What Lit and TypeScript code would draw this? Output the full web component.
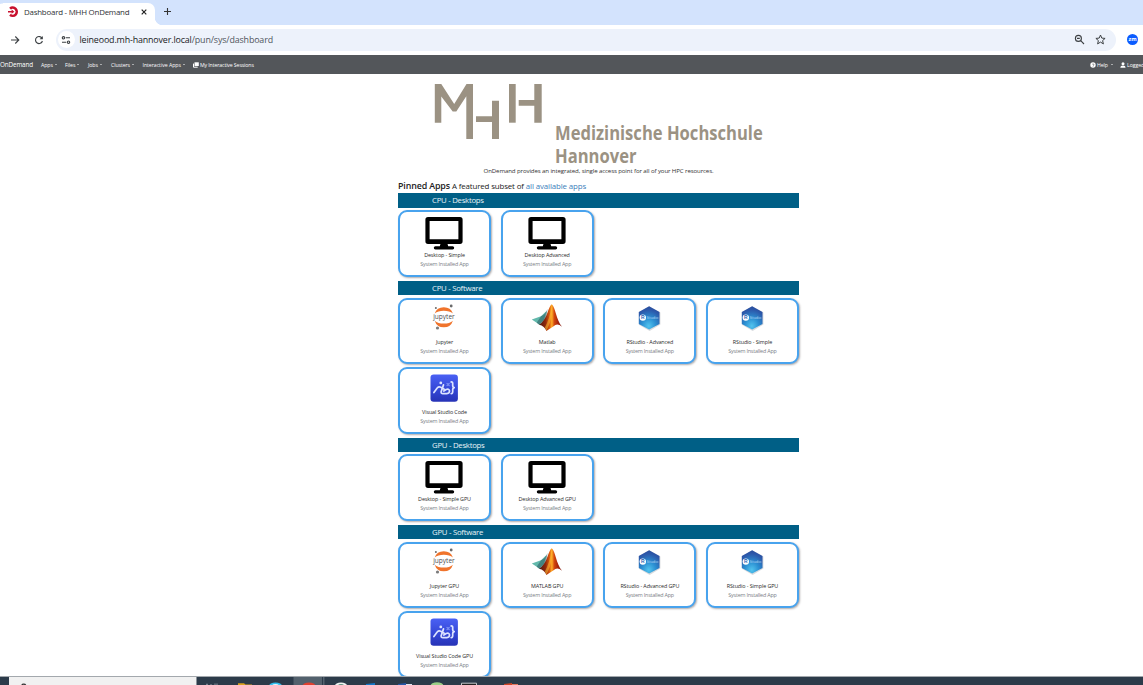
import { LitElement, html, css, svg } from "lit";
import { customElement, property } from "lit/decorators.js";

type Icon = "desktop" | "jupyter" | "matlab" | "rstudio" | "code";
interface App { name: string; icon: Icon; }
interface Group { title: string; apps: App[]; }

const groups: Group[] = [
  { title: "CPU - Desktops", apps: [
    { name: "Desktop - Simple", icon: "desktop" },
    { name: "Desktop Advanced", icon: "desktop" } ] },
  { title: "CPU - Software", apps: [
    { name: "Jupyter", icon: "jupyter" },
    { name: "Matlab", icon: "matlab" },
    { name: "RStudio - Advanced", icon: "rstudio" },
    { name: "RStudio - Simple", icon: "rstudio" },
    { name: "Visual Studio Code", icon: "code" } ] },
  { title: "GPU - Desktops", apps: [
    { name: "Desktop - Simple GPU", icon: "desktop" },
    { name: "Desktop Advanced GPU", icon: "desktop" } ] },
  { title: "GPU - Software", apps: [
    { name: "Jupyter GPU", icon: "jupyter" },
    { name: "MATLAB GPU", icon: "matlab" },
    { name: "RStudio - Advanced GPU", icon: "rstudio" },
    { name: "RStudio - Simple GPU", icon: "rstudio" },
    { name: "Visual Studio Code GPU", icon: "code" } ] },
];

// Every app icon is drawn on a 40x36 canvas.
const icons: Record<Icon, unknown> = {
  desktop: svg`
    <path fill="#000" fill-rule="evenodd" d="M4 2H36Q38.6 2 38.6 4.6V26.3Q38.6 28.9 36 28.9H4Q1.4 28.9 1.4 26.3V4.6Q1.4 2 4 2ZM5.6 6V24.2H34.4V6Z"/>
    <path fill="#000" d="M16.6 28.5H23.4L24.2 31.2H28.6Q30.2 31.2 30.2 32.8T28.6 34.4H11.4Q9.8 34.4 9.8 32.8T11.4 31.2H15.8Z"/>`,
  jupyter: svg`
    <path fill="#f0742c" d="M10.7 11.4Q12.8 5.3 19.8 5.3T28.9 11.4Q25.6 8.8 19.8 8.8T10.7 11.4Z"/>
    <path fill="#f0742c" d="M10.7 18.7Q14 21.6 19.8 21.6T28.9 18.7Q26.8 25.3 19.8 25.3T10.7 18.7Z"/>
    <circle cx="27.2" cy="4" r="1.4" fill="#6a6a6b"/>
    <circle cx="11.9" cy="6" r="1" fill="#6a6a6b"/>
    <circle cx="13.5" cy="26" r="1.6" fill="#7b7b7c"/>
    <text x="20" y="17.2" text-anchor="middle" textLength="21.6" lengthAdjust="spacingAndGlyphs"
      font-family="Open Sans, Noto Sans, sans-serif" font-size="7" font-weight="500" fill="#4e4e50">jupyter</text>`,
  matlab: svg`
    <defs>
      <linearGradient id="peak" x1="0" x2="1" y1="0" y2="0">
        <stop offset="0" stop-color="#4a1a14"/><stop offset=".28" stop-color="#8f260c"/>
        <stop offset=".45" stop-color="#d9560f"/><stop offset=".56" stop-color="#ffae28"/>
        <stop offset=".66" stop-color="#d4480e"/><stop offset=".82" stop-color="#a8240c"/><stop offset="1" stop-color="#7a150a"/>
      </linearGradient>
    </defs>
    <path fill="#62b8ab" d="M4.8 17.4L14 14.2L19.5 9L17 18L12.3 22.8L9.7 20.8Z"/>
    <path fill="#2d5f66" d="M14 14.2Q18 13 20.5 7L19 17L12.3 22.8L9.7 20.8Z" opacity=".6"/>
    <path fill="url(#peak)" d="M12 22.8Q17.5 19.2 20 12Q22.7 3.5 24.8 2.2C28.3 5 29.2 18 35 24.8Q30.2 20.6 26.6 24.3L19.4 28.9Q17.6 24 12 22.8Z"/>
    <path fill="#ffc83a" d="M24.6 3.4Q25.4 13 22.8 21L19.5 28.8Q18.6 26.6 17.8 25.6Q22.6 17 24.6 3.4Z" opacity=".5"/>`,
  rstudio: svg`
    <defs>
      <radialGradient id="hex" cx=".48" cy=".85" r=".82">
        <stop offset="0" stop-color="#52c4ee"/><stop offset=".42" stop-color="#2b8fd2"/><stop offset=".85" stop-color="#2c58aa"/><stop offset="1" stop-color="#2a4f9f"/>
      </radialGradient>
    </defs>
    <path fill="#c9ccd0" d="M20.3 4.2L31.4 10.4V22.6L20.7 28.9L9.9 22.8V10.2Z" opacity=".7"/>
    <path fill="url(#hex)" d="M20.1 4.3L30.5 10V21.9L20.1 27.5L9.8 21.9V10Z"/>
    <circle cx="13.8" cy="15.6" r="3.2" fill="#fff"/>
    <text x="13.8" y="17.4" text-anchor="middle" font-family="Liberation Sans, sans-serif" font-size="5" font-weight="700" fill="#2b67b5">R</text>
    <text x="17.5" y="17.2" textLength="11.8" lengthAdjust="spacingAndGlyphs" font-family="Liberation Sans, sans-serif" font-size="4.4" fill="#a5cdf2">Studio</text>`,
  code: svg`
    <defs>
      <linearGradient id="tile" x1="0" x2="0" y1="0" y2="1">
        <stop offset="0" stop-color="#4a61f4"/><stop offset=".55" stop-color="#3447d6"/><stop offset="1" stop-color="#2733b6"/>
      </linearGradient>
    </defs>
    <rect x="6.5" y="2.4" width="27.4" height="27.4" rx="3.2" fill="url(#tile)"/>
    <g transform="translate(.2 -1.3)" fill="none" stroke="#dce3ff" stroke-width="1.7" stroke-linecap="round" stroke-linejoin="round">
      <circle cx="16.6" cy="12.2" r="1.4" fill="#dce3ff" stroke="none"/>
      <path d="M9.7 21.8L13 17.3Q14.6 15.6 16.5 16.6L20 18.6"/>
      <path d="M19.3 14.2L16.9 21.2Q16.8 23 18.6 23H22.6Q25.6 22.6 25.3 20Q24.6 17.8 22 18.8L19.6 20.3"/>
      <path d="M22.8 12.8L25 15M25 12.8L22.8 15" stroke="#7f92f5" stroke-width="1.2"/>
      <path d="M27 11.2Q28.8 11.2 28.5 13.7Q28.2 16.7 30 17Q28.2 17.4 28.5 20Q28.8 22.9 27 22.9"/>
    </g>`,
};

@customElement("app-card")
class AppCard extends LitElement {
  @property() name = "";
  @property() icon: Icon = "desktop";
  static styles = css`
    :host { display: block; }
    .card {
      box-sizing: border-box; height: 66.4px; border: 2px solid #48a3ee; border-radius: 9px;
      background: #fff; box-shadow: 1px 1px 2px rgba(60, 50, 50, .4);
      display: flex; flex-direction: column; align-items: center; padding-top: 2.1px;
    }
    svg { width: 40px; height: 36px; flex: none; display: block; margin-right: 1px; }
    .name, .kind { white-space: nowrap; font-size: 5.4px; line-height: 9.4px; }
    .name { color: #2b2b2b; letter-spacing: -.1px; }
    .kind { color: #7b8086; letter-spacing: -.2px; line-height: 8.8px; }
  `;
  render() {
    return html`<div class="card">
      <svg viewBox="0 0 40 36">${icons[this.icon]}</svg>
      <div class="name">${this.name}</div>
      <div class="kind">System Installed App</div>
    </div>`;
  }
}

@customElement("browser-chrome")
class BrowserChrome extends LitElement {
  static styles = css`
    :host { display: block; }
    .strip { height: 24.5px; background: #d3e3fd; display: flex; align-items: flex-end; }
    .tab {
      position: relative; box-sizing: border-box; width: 155px; height: 22px; background: #fff; border-radius: 0 7px 0 0;
      display: flex; align-items: center; padding: 0 7px 3px 7px; color: #303236; font-size: 7.9px;
    }
    .tab::after {
      content: ""; position: absolute; left: 155px; bottom: 0; width: 7px; height: 7px;
      background: radial-gradient(circle at 100% 0, transparent 6.8px, #fff 7.2px);
    }
    .tab::before {
      content: ""; position: absolute; left: 0; top: 0; width: 3px; height: 9px;
      background: radial-gradient(circle at 100% 100%, transparent 8px, #d3e3fd 9px);
    }
    .title { margin-left: 5px; width: 117px; white-space: nowrap; letter-spacing: -.22px; }
    svg { display: block; flex: none; }
    .plus { margin: 0 0 8.5px 8px; }
    .bar { height: 30.5px; background: #fff; display: flex; align-items: center; }
    .forward { margin-left: 9px; }
    .reload { margin-left: 12.5px; }
    .omni {
      box-sizing: border-box; margin-left: 12px; width: 1060px; height: 22px; border-radius: 11px; background: #edf2fb;
      display: flex; align-items: center; padding: 0 10px 0 2px;
    }
    .site { width: 17px; height: 17px; border-radius: 50%; background: #fff; display: grid; place-items: center; }
    .url { margin-left: 5px; font-size: 8.9px; letter-spacing: -.14px; color: #202124; white-space: nowrap; flex: 1; }
    .path { color: #50555c; }
    .star { margin-left: 10px; }
    .zm {
      margin-left: 11.5px; width: 11px; height: 11px; border-radius: 50%; background: #0b5cff; color: #fff;
      font-size: 5.5px; line-height: 10px; text-align: center; font-weight: 700;
    }
  `;
  render() {
    return html`
      <div class="strip">
        <div class="tab">
          <svg width="12" height="12" viewBox="0 0 12 12"><path d="M3 2.6A4.1 4.1 0 1 1 3 8.8" fill="none" stroke="#c8102e" stroke-width="2.5"/><path d="M1 4.9H4.6V3.6L7.4 5.7L4.6 7.8V6.6H1Z" fill="#c8102e"/></svg>
          <span class="title">Dashboard - MHH OnDemand</span>
          <svg width="6" height="6" viewBox="0 0 6 6"><path d="M.7.7L5.3 5.3M5.3.7L.7 5.3" stroke="#222" stroke-width="1.2"/></svg>
        </div>
        <svg class="plus" width="9" height="9" viewBox="0 0 9 9"><path d="M4.5 1V8M1 4.5H8" stroke="#333" stroke-width="1.1"/></svg>
      </div>
      <div class="bar">
        <svg class="forward" width="12" height="12" viewBox="0 0 12 12"><path d="M2 6H9.7M6.3 2.5L9.8 6L6.3 9.5" fill="none" stroke="#3c4043" stroke-width="1.1"/></svg>
        <svg class="reload" width="10" height="10" viewBox="0 0 10 10"><path d="M8.2 3.6A3.5 3.5 0 1 0 8.4 6" fill="none" stroke="#3c4043" stroke-width="1.1"/><path d="M8.8 1V4.3H5.6Z" fill="#3c4043"/></svg>
        <div class="omni">
          <div class="site"><svg width="10" height="10" viewBox="0 0 10 10" fill="none" stroke="#3c4043" stroke-width="1.1"><circle cx="2.5" cy="2.8" r="1.2"/><path d="M4.8 2.8H9M1 7.2H5.2"/><circle cx="7.5" cy="7.2" r="1.2"/></svg></div>
          <div class="url">leineood.mh-hannover.local<span class="path">/pun/sys/dashboard</span></div>
          <svg width="11" height="11" viewBox="0 0 11 11" fill="none" stroke="#3c4043" stroke-width="1.1"><circle cx="4.4" cy="4.4" r="3"/><path d="M6.7 6.7L10 10M3 4.4H5.8"/></svg>
          <svg class="star" width="11" height="11" viewBox="0 0 11 11"><path d="M5.5 1L6.8 4.1L10.1 4.4L7.6 6.6L8.4 9.9L5.5 8.1L2.6 9.9L3.4 6.6L.9 4.4L4.2 4.1Z" fill="none" stroke="#3c4043"/></svg>
        </div>
        <div class="zm">zm</div>
      </div>`;
  }
}

@customElement("task-bar")
class TaskBar extends LitElement {
  static styles = css`
    :host { display: flex; height: 9px; overflow: hidden; background: #2c3b4a; border-top: 1px solid #a3a8ad; box-sizing: border-box; }
    .start { width: 8.5px; }
    .search { width: 187px; background: #f1f1f1; border-right: 1px solid #8a9299; }
    svg { display: block; }
  `;
  render() {
    return html`<div class="start"></div>
      <div class="search"><svg width="187" height="8" viewBox="0 0 187 8"><path d="M12.5 9A2.3 2.3 0 0 1 17 9" fill="none" stroke="#333" stroke-width="1.2"/></svg></div>
      <svg width="400" height="8" viewBox="197 0 400 8">
        <path d="M206 7.3H208M211 7V9M215 6.5V9M217 6.5V9" stroke="#8d98a3"/>
        <path d="M238 6.3H244L245.5 7.5H252V9H238Z" fill="#d9a21e"/>
        <ellipse cx="275.5" cy="9" rx="6.5" ry="3.6" fill="#35bfee"/><ellipse cx="275.5" cy="9" rx="3.4" ry="2" fill="#e5f7fd"/>
        <path d="M293.5 0H322V8H293.5Z" fill="#53616d"/><path d="M323 0H324.5V8H323Z" fill="#53616d"/>
        <ellipse cx="309" cy="9" rx="6.5" ry="3.6" fill="#e1402f"/>
        <ellipse cx="341" cy="9" rx="6.2" ry="3.5" fill="#eef3f1"/><ellipse cx="341" cy="8.6" rx="3" ry="1.6" fill="#5f8f7f"/>
        <path d="M366 7L375 6V9H366Z" fill="#1278ca"/>
        <path d="M398 7L406 6V9H398Z" fill="#2657a8"/><path d="M406 7H412V9H406Z" fill="#dde5f2"/>
        <ellipse cx="437" cy="9" rx="6.5" ry="3.8" fill="#9bce87"/>
        <path d="M461.5 9V6.2H476.5V9" fill="#222" stroke="#c6cacd"/>
        <path d="M504 7L512 6V9H504Z" fill="#cf4527"/><path d="M512 7H518V9H512Z" fill="#e3785e"/>
      </svg>`;
  }
}

@customElement("app-root")
class AppRoot extends LitElement {
  static styles = css`
    :host {
      display: flex; flex-direction: column; height: 685px; overflow: hidden; background: #fff;
      font-family: "Open Sans", "Noto Sans", sans-serif;
    }
    browser-chrome, task-bar, .nav { flex: none; }
    .nav {
      box-sizing: border-box; height: 18.5px; padding-top: 1px; background: #53565a; color: #fff; display: flex; align-items: center;
      font-size: 5.2px; white-space: nowrap; overflow: hidden;
    }
    .nav svg { flex: none; display: block; }
    .brand { font-size: 6.3px; width: 41px; letter-spacing: -.12px; flex: none; }
    .item { display: flex; align-items: center; gap: 2px; letter-spacing: -.08px; flex: none; }
    .caret { width: 0; height: 0; border: 1.2px solid transparent; border-top-color: #fff; border-bottom: 0; }
    .apps { width: 24px; } .files { width: 23px; } .jobs { width: 23px; }
    .clusters { width: 31.5px; } .interactive { width: 50.5px; letter-spacing: -.04px; }
    .nav .sessions { flex: 1; gap: 1px; letter-spacing: -.11px; }
    .help { width: 30px; gap: 1px; }
    .help .caret { margin-left: 2px; }
    .user { width: 23px; gap: 1px; }
    .main { flex: 1; min-height: 0; overflow: hidden; }
    .content { width: 401px; margin-left: 398px; }
    .logo { display: flex; height: 92px; padding: 10px 0 0 36px; box-sizing: border-box; }
    .logo svg { display: block; flex: none; }
    .school {
      margin: 38.5px 0 0 12.5px; color: #9b9283; font-size: 19px; line-height: 22.7px; font-weight: 700;
      white-space: nowrap; letter-spacing: 0; transform: scaleX(.873); transform-origin: 0 0;
    }
    .lead { text-align: center; font-size: 6.1px; line-height: 9px; color: #333; height: 13.4px; letter-spacing: -.11px; }
    .pinned { height: 14.6px; line-height: 13.8px; font-size: 7.9px; color: #222; white-space: nowrap; letter-spacing: -.13px; }
    .pinned b { font-size: 8.9px; font-weight: 600; }
    .link { color: #3c80bb; }
    .header { height: 14.3px; line-height: 14.3px; background: #005f86; color: #e9f3f7; font-size: 7.8px; letter-spacing: -.28px; padding-left: 34px; margin-bottom: 2.7px; }
    .grid { display: grid; grid-template-columns: repeat(4, 93px); justify-content: space-between; row-gap: 3.5px; margin-bottom: 3.7px; }
  `;
  render() {
    const caret = html`<span class="caret"></span>`;
    return html`
      <browser-chrome></browser-chrome>
      <div class="nav">
        <span class="brand">OnDemand</span>
        <span class="item apps">Apps${caret}</span>
        <span class="item files">Files${caret}</span>
        <span class="item jobs">Jobs${caret}</span>
        <span class="item clusters">Clusters${caret}</span>
        <span class="item interactive">Interactive Apps${caret}</span>
        <span class="item sessions"><svg width="6" height="6" viewBox="0 0 6 6"><path d="M1.5.3H5.8V4H1.5Z" fill="#fff"/><path d="M.5 1.6V5.2H4.7" fill="none" stroke="#fff"/></svg>My Interactive Sessions</span>
        <span class="item help"><svg width="6" height="6" viewBox="0 0 6 6"><circle cx="3" cy="3" r="2.7" fill="#fff"/><path d="M2.2 2.4Q3 1.2 3.8 2.2T3 3.5M3 4.1V4.7" fill="none" stroke="#53565a" stroke-width=".6"/></svg>Help${caret}</span>
        <span class="item user"><svg width="6" height="6" viewBox="0 0 6 6"><circle cx="3" cy="1.8" r="1.5" fill="#fff"/><path d="M.4 5.8Q.4 3.5 3 3.5T5.6 5.8Z" fill="#fff"/></svg>Logged</span>
      </div>
      <div class="main">
        <div class="content">
          <div class="logo">
            <svg width="108" height="56" viewBox="434 84 108 56" fill="#9b9283">
              <path d="M434.8 84H441.3L454.2 104L466.5 84H473V139H466.3V96.2L456.3 111.4H452.7L441.3 96.5V122.7H434.8Z"/>
              <path d="M476 116.3H492V100.7H499V139H492V122H476Z"/>
              <path d="M509 84H515.7V122.7H509Z"/>
              <path d="M518.7 100H534.3V84H541.7V122.7H534.3V105.7H518.7Z"/>
            </svg>
            <div class="school">Medizinische Hochschule<br>Hannover</div>
          </div>
          <div class="lead">OnDemand provides an integrated, single access point for all of your HPC resources.</div>
          <div class="pinned"><b>Pinned Apps</b> A featured subset of <span class="link">all available apps</span></div>
          ${groups.map(g => html`
            <div class="header">${g.title}</div>
            <div class="grid">${g.apps.map(a => html`<app-card .name=${a.name} .icon=${a.icon}></app-card>`)}</div>`)}
        </div>
      </div>
      <task-bar></task-bar>`;
  }
}
